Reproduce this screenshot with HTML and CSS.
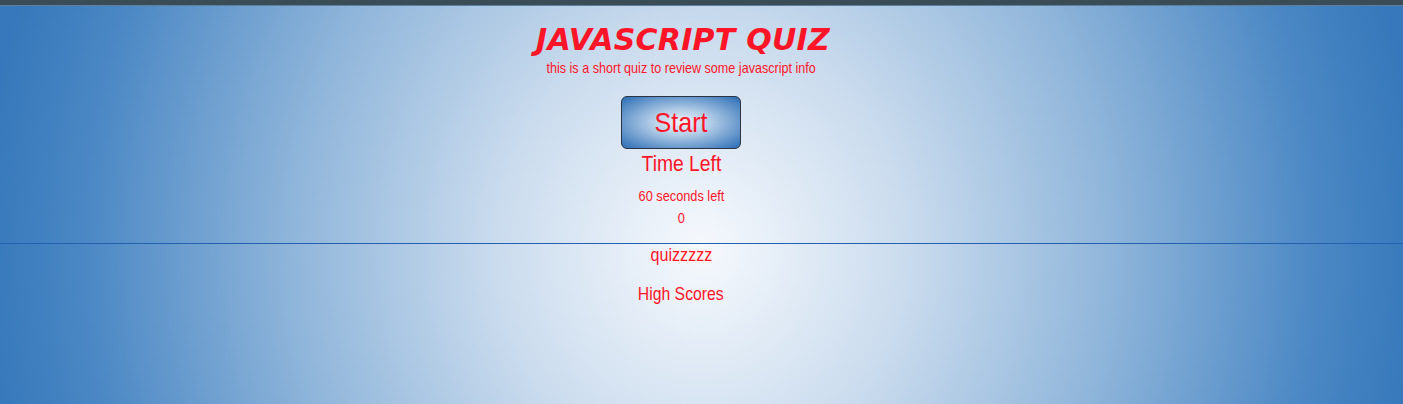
FILE: index.html
```html
<!DOCTYPE html>
<html lang="en">
<head>
<meta charset="utf-8">
<title>JavaScript Quiz</title>
<link rel="stylesheet" href="styles.css">
</head>
<body>
<div class="topbar"></div>
<header class="block">
  <h1 class="title">JAVASCRIPT QUIZ</h1>
  <p class="subtitle"><span class="narrow">this is a short quiz to review some javascript info</span></p>
  <button class="start"><span class="narrow">Start</span></button>
  <h2 class="time-left"><span class="narrow">Time Left</span></h2>
  <p class="seconds"><span class="narrow">60 seconds left</span></p>
  <p class="counter"><span class="narrow">0</span></p>
</header>
<hr class="divider">
<section class="block">
  <p class="quiz"><span class="narrow">quizzzzz</span></p>
  <p class="scores"><span class="narrow">High Scores</span></p>
</section>
</body>
</html>
```
FILE: styles.css
```css
html, body {
  margin: 0;
  padding: 0;
  height: 100%;
}
body {
  background: radial-gradient(ellipse 720px 780px at 50% 250px, #f6f9fd 0%, #cbdcee 28%, #8fb5da 57%, #4a87c4 86%, #3678bb 100%);
  font-family: "Liberation Sans", Arial, sans-serif;
  color: #ff1428;
  overflow: hidden;
}
.topbar {
  height: 5px;
  background: #3a4d56;
  border-bottom: 1px solid #5f7f9f;
}
.block {
  display: flex;
  flex-direction: column;
  align-items: center;
  padding-right: 41px;
}
.narrow {
  display: inline-block;
  white-space: nowrap;
  transform-origin: 50% 50%;
  transform: scaleX(var(--sx, 0.86));
}
.title {
  margin: 16px 0 0 4px;
  font-family: "DejaVu Sans", Verdana, sans-serif;
  font-weight: bold;
  font-style: italic;
  font-size: 30px;
  line-height: 36px;
  letter-spacing: 0.25px;
}
.subtitle {
  margin: 1px 0 0;
  font-size: 14.5px;
  line-height: 18px;
  --sx: 0.868;
}
.start {
  margin-top: 19px;
  width: 120px;
  height: 53px;
  box-sizing: border-box;
  border: 1px solid #2b3440;
  border-radius: 6px;
  background: radial-gradient(ellipse at 50% 50%, #eef4fa 0%, #b3cde7 35%, #2a6cb5 100%);
  color: #ff1428;
  font-family: inherit;
  font-size: 28.5px;
  line-height: 1;
  padding: 0;
  display: flex;
  align-items: center;
  justify-content: center;
  --sx: 0.88;
}
.time-left {
  margin: 3px 0 0;
  font-weight: normal;
  font-size: 22px;
  line-height: 24px;
  --sx: 0.878;
}
.seconds {
  margin: 11px 0 0;
  font-size: 15px;
  line-height: 18px;
  --sx: 0.85;
}
.counter {
  margin: 4px 0 0;
  font-size: 15px;
  line-height: 18px;
  --sx: 0.85;
}
.divider {
  margin: 16px 0 0;
  border: 0;
  height: 1px;
  background: #2360b0;
}
.quiz {
  margin: 0;
  font-size: 19px;
  line-height: 22px;
  --sx: 0.847;
}
.scores {
  margin: 17px 0 0;
  font-size: 19px;
  line-height: 22px;
  --sx: 0.83;
}
```
